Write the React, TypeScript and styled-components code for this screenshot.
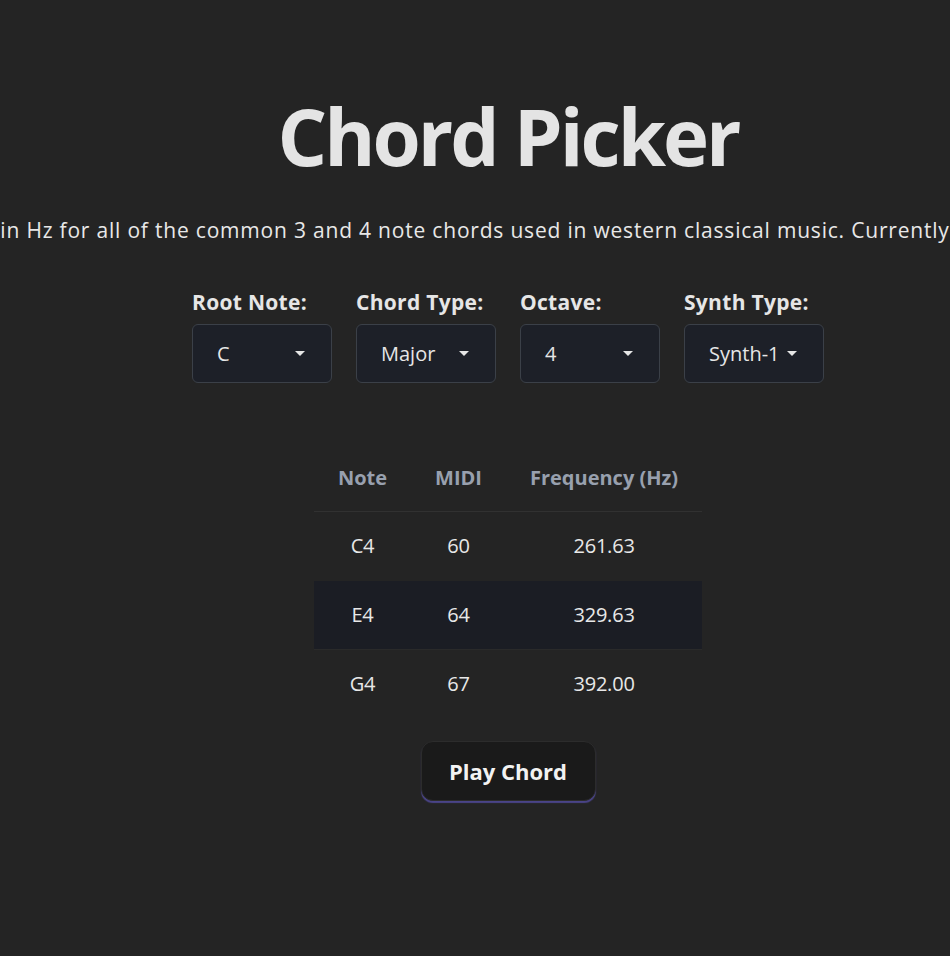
import React, { useState } from "react";
import styled, { createGlobalStyle } from "styled-components";

const GlobalStyle = createGlobalStyle`
  html, body {
    margin: 0;
    padding: 0;
    background: #242424;
    color: rgba(255, 255, 255, 0.87);
    font-family: "Open Sans", "Noto Sans", sans-serif;
    overflow-x: hidden;
  }
  * { box-sizing: border-box; }
`;

const Page = styled.main`
  display: flex;
  flex-direction: column;
  align-items: center;
  min-height: 956px;
  padding: 88px 0 0 66px;
`;

const Title = styled.h1`
  margin: 0;
  font-size: 78px;
  line-height: 96px;
  font-weight: 700;
  color: #e4e4e4;
  letter-spacing: -3px;
`;

const Intro = styled.p`
  align-self: stretch;
  margin: 32px 0 0 -66px;
  white-space: nowrap;
  overflow: hidden;
  text-align: center;
  font-size: 21px;
  line-height: 28px;
  letter-spacing: 0.8px;
  color: #e8e8e8;
`;

const Controls = styled.div`
  display: flex;
  gap: 24px;
  margin-top: 44px;
`;

const Field = styled.label`
  display: flex;
  flex-direction: column;
  gap: 8px;
  width: 140px;
`;

const FieldLabel = styled.span`
  font-size: 21px;
  line-height: 28px;
  font-weight: 700;
  letter-spacing: 0.3px;
  white-space: nowrap;
  color: #e6e6e6;
`;

const SelectBox = styled.div`
  position: relative;
  height: 59px;
  border: 1px solid #3b4048;
  border-radius: 6px;
  background: #1d2028;
  display: flex;
  align-items: center;
  padding: 0 12px 0 24px;
  font-size: 20px;
  color: #e6e6e6;
`;

const SelectText = styled.span`
  flex: 1;
`;

const Caret = styled.span`
  width: 0;
  height: 0;
  border-left: 5px solid transparent;
  border-right: 5px solid transparent;
  border-top: 5px solid #e6e6e6;
  margin-right: 14px;
`;

const Table = styled.table`
  margin-top: 64px;
  border-collapse: collapse;
  font-size: 20px;
`;

const HeadCell = styled.th`
  padding: 18px 24px 20px;
  line-height: 26px;
  font-weight: 700;
  color: #98a0ae;
  border-bottom: 1px solid #313131;
  text-align: center;
`;

const Row = styled.tr<{ $striped?: boolean }>`
  background: ${(p) => (p.$striped ? "#1b1d24" : "transparent")};
  border-bottom: 1px solid ${(p) => (p.$striped ? "#2a2a2a" : "transparent")};
`;

const Cell = styled.td`
  padding: 21px 24px 21px;
  line-height: 26px;
  text-align: center;
  color: #e8e8e8;
  letter-spacing: -0.2px;
`;

const PlayButton = styled.button`
  margin-top: 22px;
  width: 175px;
  height: 60px;
  border-radius: 12px;
  border: 1px solid #2c2c2c;
  background: #1a1a1a;
  color: #f2f2f2;
  font-family: inherit;
  font-size: 22px;
  font-weight: 700;
  cursor: pointer;
  box-shadow: 0 2px 1px #4a4488;
`;

const fields = [
  { label: "Root Note:", value: "C" },
  { label: "Chord Type:", value: "Major" },
  { label: "Octave:", value: "4" },
  { label: "Synth Type:", value: "Synth-1" },
];

const rows = [
  { note: "C4", midi: 60, freq: "261.63" },
  { note: "E4", midi: 64, freq: "329.63" },
  { note: "G4", midi: 67, freq: "392.00" },
];

export default function App() {
  const [count, setCount] = useState(0);
  return (
    <>
      <GlobalStyle />
      <Page>
        <Title>Chord Picker</Title>
        <Intro>
          in Hz for all of the common 3 and 4 note chords used in western classical music. Currently
        </Intro>
        <Controls>
          {fields.map((f) => (
            <Field key={f.label}>
              <FieldLabel>{f.label}</FieldLabel>
              <SelectBox>
                <SelectText>{f.value}</SelectText>
                <Caret />
              </SelectBox>
            </Field>
          ))}
        </Controls>
        <Table>
          <thead>
            <tr>
              <HeadCell>Note</HeadCell>
              <HeadCell>MIDI</HeadCell>
              <HeadCell>Frequency (Hz)</HeadCell>
            </tr>
          </thead>
          <tbody>
            {rows.map((r, i) => (
              <Row key={r.note} $striped={i === 1}>
                <Cell>{r.note}</Cell>
                <Cell>{r.midi}</Cell>
                <Cell>{r.freq}</Cell>
              </Row>
            ))}
          </tbody>
        </Table>
        <PlayButton onClick={() => setCount(count + 1)}>Play Chord</PlayButton>
      </Page>
    </>
  );
}
